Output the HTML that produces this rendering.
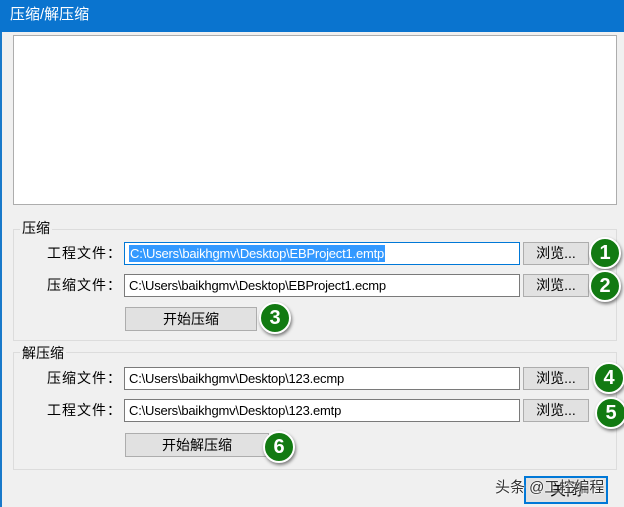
<!DOCTYPE html><html><head><meta charset="utf-8"><style>
body{margin:0;width:624px;height:507px;overflow:hidden;background:#f0f0f0;font-family:"Liberation Sans","Microsoft YaHei","Noto Sans CJK SC",sans-serif;font-size:14px;color:#000;position:relative}
.a{position:absolute}
.title{left:0;top:0;width:624px;height:32px;background:#0a74cf;color:#fff;font-size:15px;line-height:30px;padding-left:10px;box-sizing:border-box}
.lb{left:0;top:32px;width:2px;height:475px;background:#1979ca}
.memo{left:13px;top:35px;width:604px;height:170px;background:#fff;border:1px solid #adadad;box-sizing:border-box}
.grp{border:1px solid #dcdcdc;box-sizing:border-box}
.gl{background:#f0f0f0;padding:0 2px;font-size:14px}
.lab{font-size:14px;width:112px;text-align:right;left:10px;letter-spacing:1px}
.inp{left:124px;width:396px;height:23px;background:#fff;border:1px solid #7a7a7a;box-sizing:border-box;font-size:13px;line-height:21px;padding-left:4px;white-space:nowrap;letter-spacing:-0.2px}
.sel{background:#3399ff;color:#fff;padding:1px 1px}
.btn{background:#e1e1e1;border:1px solid #adadad;box-sizing:border-box;text-align:center;font-size:14px}
.c{width:28px;height:28px;border-radius:50%;background:#127a12;border:2px solid #fff;box-shadow:1px 2px 3px rgba(0,0,0,.5);color:#fff;font-weight:bold;font-size:20px;text-align:center;line-height:28px;font-family:"Liberation Sans",sans-serif}
</style></head><body>
<div class="a title">压缩/解压缩</div>
<div class="a lb"></div>
<div class="a memo"></div>
<div class="a grp" style="left:13px;top:229px;width:604px;height:112px"></div>
<div class="a gl" style="left:20px;top:218px">压缩</div>
<div class="a lab" style="top:243px">工程文件：</div>
<div class="a inp" style="top:242px;border-color:#0078d7"><span class="sel">C:\Users\baikhgmv\Desktop\EBProject1.emtp</span></div>
<div class="a lab" style="top:275px">压缩文件：</div>
<div class="a inp" style="top:274px">C:\Users\baikhgmv\Desktop\EBProject1.ecmp</div>
<div class="a btn" style="left:523px;top:242px;width:66px;height:23px;line-height:21px">浏览...</div>
<div class="a btn" style="left:523px;top:274px;width:66px;height:23px;line-height:21px">浏览...</div>
<div class="a c" style="left:589px;top:237px">1</div>
<div class="a c" style="left:589px;top:270px">2</div>
<div class="a btn" style="left:125px;top:307px;width:132px;height:24px;line-height:22px">开始压缩</div>
<div class="a c" style="left:259px;top:302px">3</div>

<div class="a grp" style="left:13px;top:352px;width:604px;height:118px"></div>
<div class="a gl" style="left:20px;top:343px">解压缩</div>
<div class="a lab" style="top:368px">压缩文件：</div>
<div class="a inp" style="top:367px">C:\Users\baikhgmv\Desktop\123.ecmp</div>
<div class="a lab" style="top:400px">工程文件：</div>
<div class="a inp" style="top:399px">C:\Users\baikhgmv\Desktop\123.emtp</div>
<div class="a btn" style="left:523px;top:367px;width:66px;height:23px;line-height:21px">浏览...</div>
<div class="a btn" style="left:523px;top:399px;width:66px;height:23px;line-height:21px">浏览...</div>
<div class="a c" style="left:593px;top:362px">4</div>
<div class="a c" style="left:595px;top:397px">5</div>
<div class="a btn" style="left:125px;top:433px;width:144px;height:24px;line-height:22px">开始解压缩</div>
<div class="a c" style="left:263px;top:431px">6</div>

<div class="a btn" style="left:524px;top:476px;width:84px;height:28px;line-height:26px;border:2px solid #0078d7;font-size:16px">关闭</div>
<div class="a" style="left:495px;top:476px;font-size:15px;color:#333;text-shadow:0 0 2px #fff,0 0 2px #fff">头条 @工控编程</div>
</body></html>
